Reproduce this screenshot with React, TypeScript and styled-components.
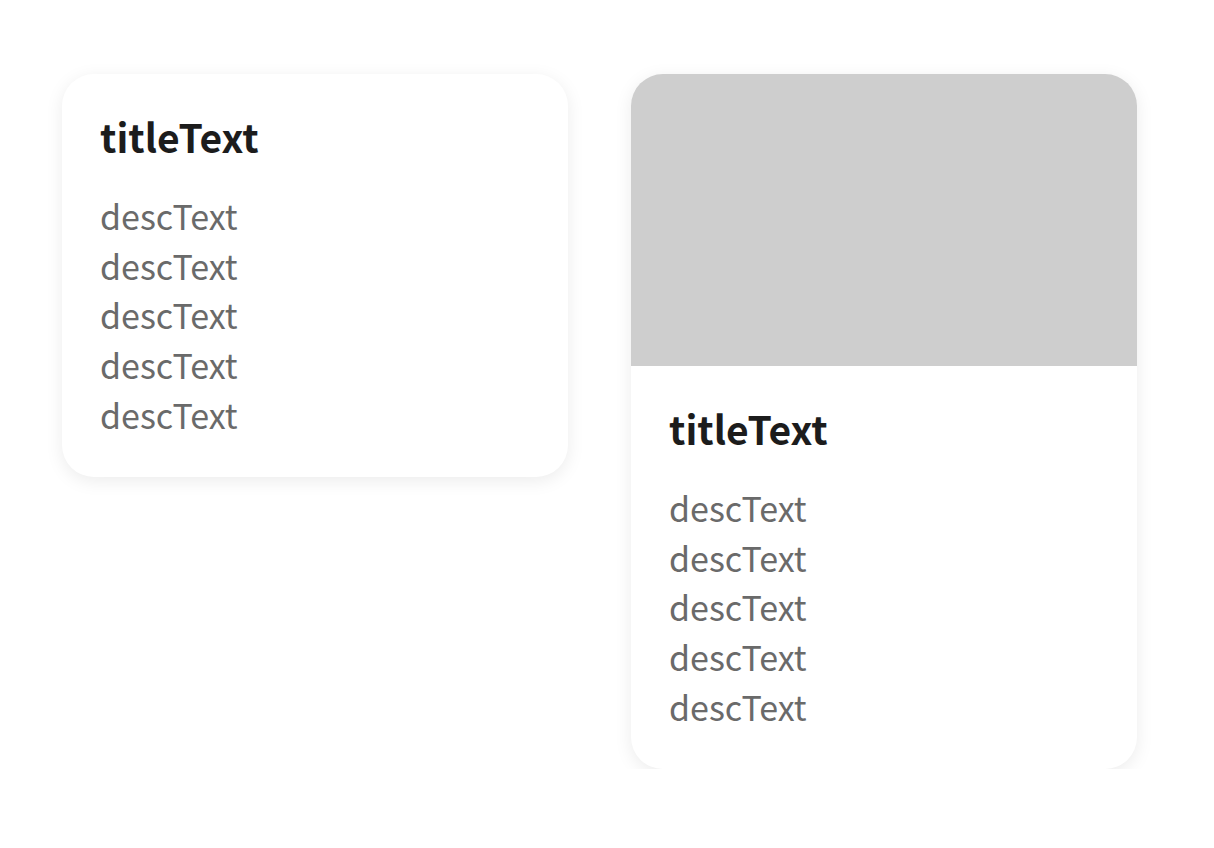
import React from "react";
import styled, { createGlobalStyle } from "styled-components";

const Global = createGlobalStyle`
  html, body { margin: 0; padding: 0; background: #ffffff; }
  body { font-family: "Noto Sans CJK SC", "Noto Sans", sans-serif; }
`;

const Page = styled.div`
  display: flex;
  align-items: flex-start;
  gap: 63px;
  padding: 74px 0 0 62px;
`;

const Card = styled.div`
  width: 506px;
  background: #ffffff;
  border-radius: 32px;
  overflow: hidden;
  box-shadow: 0 4px 18px rgba(0, 0, 0, 0.08);
  display: flex;
  flex-direction: column;
`;

const Media = styled.div`
  height: 292px;
  background: #cecece;
`;

const Body = styled.div`
  display: flex;
  flex-direction: column;
  padding: 36px 38px 37px;
`;

const Title = styled.div`
  font-size: 39px;
  font-weight: 700;
  line-height: 52px;
  color: #1c1c1c;
  margin-bottom: 29px;
`;

const Desc = styled.div`
  font-size: 34px;
  line-height: 49.7px;
  color: #6a6a6a;
`;

const lines = ["descText", "descText", "descText", "descText", "descText"];

function CardContent() {
  return (
    <Body>
      <Title>titleText</Title>
      {lines.map((l, i) => (
        <Desc key={i}>{l}</Desc>
      ))}
    </Body>
  );
}

export default function App() {
  return (
    <>
      <Global />
      <Page>
        <Card>
          <CardContent />
        </Card>
        <Card>
          <Media />
          <CardContent />
        </Card>
      </Page>
    </>
  );
}
